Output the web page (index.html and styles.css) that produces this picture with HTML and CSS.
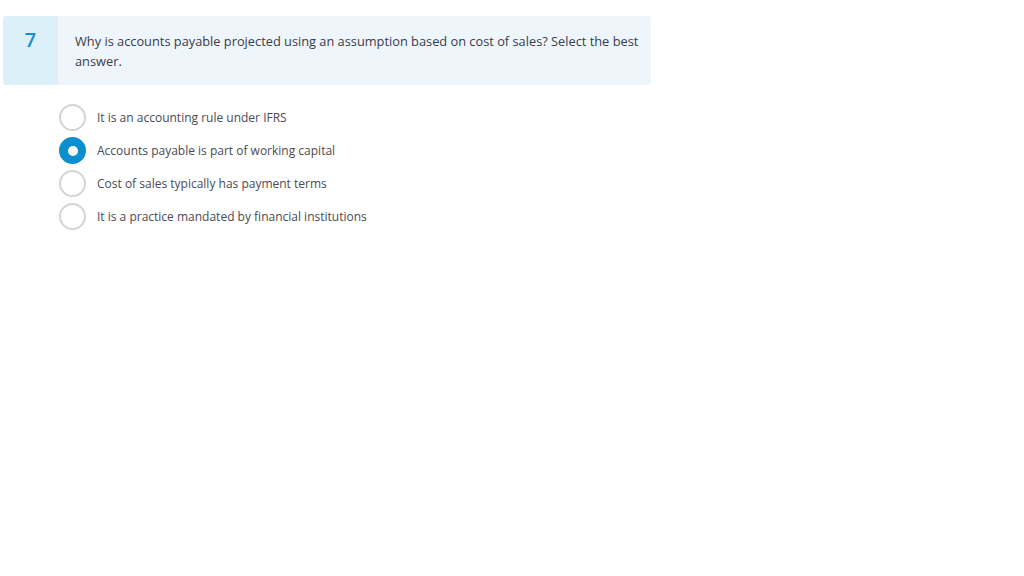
FILE: index.html
```html
<!DOCTYPE html>
<html>
<head>
<meta charset="utf-8">
<link rel="stylesheet" href="styles.css">
</head>
<body>
<div class="question">
  <div class="q-card">
    <div class="q-num">7</div>
    <div class="q-text">Why is accounts payable projected using an assumption based on cost of sales? Select the best answer.</div>
  </div>
  <ul class="options">
    <li class="option"><span class="radio"></span><span class="label">It is an accounting rule under IFRS</span></li>
    <li class="option"><span class="radio checked"></span><span class="label">Accounts payable is part of working capital</span></li>
    <li class="option"><span class="radio"></span><span class="label">Cost of sales typically has payment terms</span></li>
    <li class="option"><span class="radio"></span><span class="label">It is a practice mandated by financial institutions</span></li>
  </ul>
</div>
</body>
</html>
```
FILE: styles.css
```css
html, body {
  margin: 0;
  padding: 0;
  background: #ffffff;
  font-family: "Open Sans", "Liberation Sans", sans-serif;
}
.question {
  padding: 16px 0 0 3px;
  width: 648px;
}
.q-card {
  display: flex;
  background: #eef6fc;
  border-radius: 3px;
  overflow: hidden;
  min-height: 69px;
}
.q-num {
  width: 55px;
  flex: none;
  background: #dcf0fa;
  color: #1b8ccc;
  font-size: 20px;
  font-weight: 600;
  line-height: 28px;
  text-align: center;
  padding-top: 10px;
}
.q-text {
  padding: 15px 10px 0 17px;
  font-size: 12.8px;
  line-height: 20px;
  color: #3b3b4a;
}
.options {
  list-style: none;
  margin: 19px 0 0 56px;
  padding: 0;
  display: flex;
  flex-direction: column;
  gap: 6px;
}
.option {
  display: flex;
  align-items: center;
  gap: 11px;
  height: 27px;
}
.radio {
  width: 23px;
  height: 23px;
  border: 2px solid #d4d4d4;
  border-radius: 50%;
  box-sizing: content-box;
  flex: none;
  background: #fff;
}
.radio.checked {
  border-color: #0b8fd1;
  background: #0b8fd1;
  position: relative;
}
.radio.checked::after {
  content: "";
  position: absolute;
  left: 50%;
  top: 50%;
  width: 10px;
  height: 10px;
  margin: -5px 0 0 -5px;
  border-radius: 50%;
  background: #fff;
}
.label {
  font-size: 12px;
  color: #4a4a55;
}
```
